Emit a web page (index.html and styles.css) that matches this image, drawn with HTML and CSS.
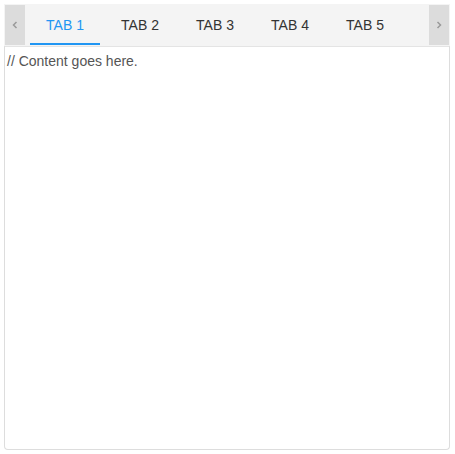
FILE: index.html
```html
<!DOCTYPE html>
<html>
<head>
<meta charset="utf-8">
<link rel="stylesheet" href="styles.css">
</head>
<body>
<div class="tabs">
  <div class="tabs-header">
    <div class="scroll-btn">
      <svg width="8" height="10" viewBox="0 0 8 10"><path d="M5.5 2 L2.5 5 L5.5 8" fill="none" stroke="#9a9a9a" stroke-width="1.5"/></svg>
    </div>
    <div class="tab-list">
      <div class="tab active">TAB 1</div>
      <div class="tab">TAB 2</div>
      <div class="tab">TAB 3</div>
      <div class="tab">TAB 4</div>
      <div class="tab">TAB 5</div>
    </div>
    <div class="scroll-btn">
      <svg width="8" height="10" viewBox="0 0 8 10"><path d="M2.5 2 L5.5 5 L2.5 8" fill="none" stroke="#9a9a9a" stroke-width="1.5"/></svg>
    </div>
  </div>
  <div class="tabs-content">// Content goes here.</div>
</div>
</body>
</html>
```

FILE: styles.css
```css
html, body {
  margin: 0;
  padding: 0;
  background: #ffffff;
}
body {
  padding: 4px;
  font-family: "Liberation Sans", Arial, sans-serif;
  font-size: 14px;
}
.tabs {
  width: 446px;
  height: 446px;
  display: flex;
  flex-direction: column;
}
.tabs-header {
  height: 42px;
  box-sizing: border-box;
  padding: 1px;
  background: #f4f4f4;
  display: flex;
  align-items: stretch;
}
.scroll-btn {
  width: 20px;
  background: #dcdcdc;
  display: flex;
  align-items: center;
  justify-content: center;
}
.tab-list {
  flex: 1;
  display: flex;
  padding-left: 5px;
  gap: 5px;
}
.tab {
  width: 70px;
  box-sizing: border-box;
  display: flex;
  align-items: center;
  justify-content: center;
  color: #333333;
  padding-top: 2px;
  border-bottom: 2px solid transparent;
}
.tab.active {
  color: #2196f3;
  border-bottom-color: #2196f3;
}
.tabs-content {
  flex: 1;
  border: 1px solid #dddddd;
  border-top-color: #e4e4e4;
  border-radius: 0 0 4px 4px;
  padding: 5px 2px;
  color: #555555;
  line-height: 18px;
}
```
